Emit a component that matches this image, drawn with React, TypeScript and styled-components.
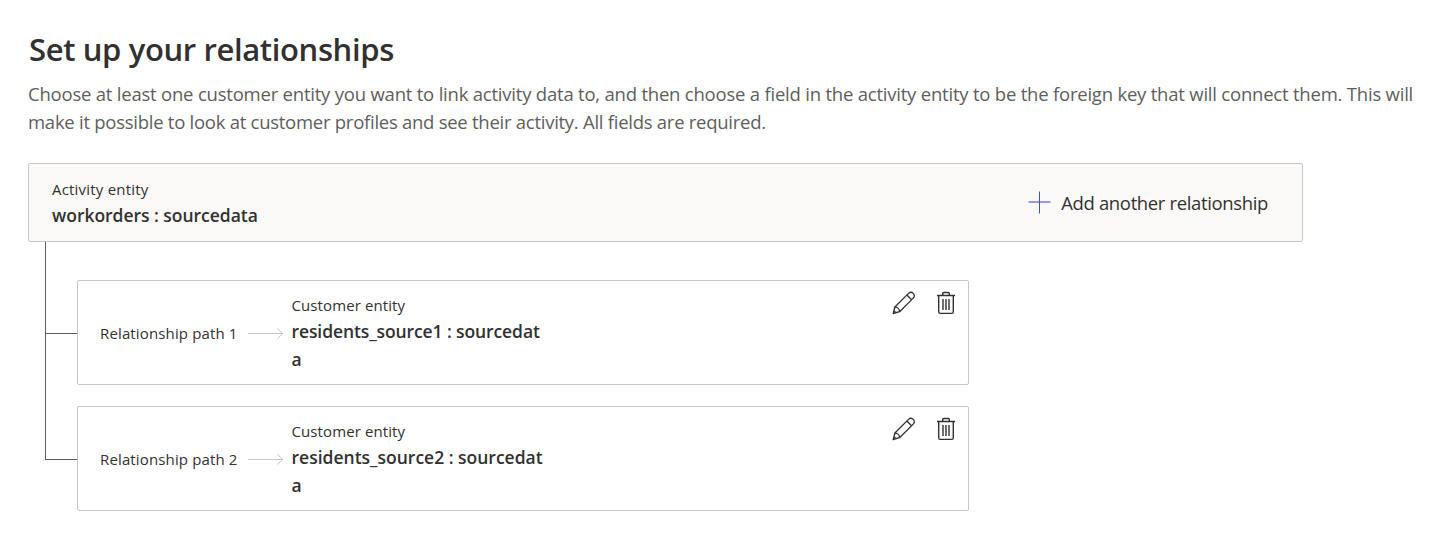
import React from "react";
import styled, { createGlobalStyle } from "styled-components";

const GlobalStyle = createGlobalStyle`
  * { box-sizing: border-box; }
  body {
    margin: 0;
    background: #fff;
    color: #323130;
    font-family: "Segoe UI", "Open Sans", "Noto Sans", sans-serif;
  }
`;

const Page = styled.main`
  padding: 28px 0 0 28px;
`;

const Title = styled.h1`
  margin: 0;
  padding-left: 1px;
  font-size: 31px;
  line-height: 42px;
  font-weight: 600;
  letter-spacing: -0.37px;
  white-space: nowrap;
`;

const Description = styled.p`
  margin: 10px 0 27px;
  font-size: 18.5px;
  line-height: 28px;
  color: #605e5c;
`;

const Line = styled.span<{ $spacing: number }>`
  display: block;
  white-space: nowrap;
  letter-spacing: ${(p) => p.$spacing}px;
`;

const ActivityPanel = styled.section`
  display: flex;
  justify-content: space-between;
  align-items: center;
  width: 1275px;
  height: 79px;
  padding: 0 34px 0 23px;
  background: #faf9f8;
  border: 1px solid #c8c6c4;
  border-radius: 2px;
`;

const Label = styled.div<{ $spacing?: number }>`
  font-size: 15px;
  line-height: 24px;
  letter-spacing: ${(p) => p.$spacing ?? 0.14}px;
  white-space: nowrap;
`;

const EntityName = styled.div<{ $spacing?: number }>`
  font-size: 17.5px;
  line-height: 28px;
  font-weight: 600;
  letter-spacing: ${(p) => p.$spacing ?? 0}px;
  word-break: break-all;
`;

const AddButton = styled.button`
  display: flex;
  align-items: center;
  gap: 10px;
  padding: 0;
  border: 0;
  background: none;
  color: #323130;
  font-family: inherit;
  font-size: 18.5px;
  line-height: 28px;
  letter-spacing: -0.36px;
  white-space: nowrap;
`;

const Tree = styled.div`
  width: 924px;
  margin-left: 17px;
`;

const Branch = styled.div<{ $gap: number }>`
  display: flex;
  height: ${(p) => p.$gap + 105}px;
`;

const Connector = styled.div`
  width: 32px;
  display: flex;
  flex-direction: column;
`;

const Elbow = styled.div<{ $gap: number }>`
  height: ${(p) => p.$gap + 54}px;
  border-left: 1px solid #605e5c;
  border-bottom: 1px solid #605e5c;
`;

const Trunk = styled.div`
  flex: 1;
  border-left: 1px solid #605e5c;
`;

const Card = styled.article<{ $gap: number }>`
  display: flex;
  width: 892px;
  height: 105px;
  margin-top: ${(p) => p.$gap}px;
  padding: 0 10px 0 22px;
  border: 1px solid #c8c6c4;
  border-radius: 2px;
`;

const Path = styled.div`
  display: flex;
  align-items: center;
  width: 191.5px;
`;

const PathLabel = styled(Label)`
  width: 148px;
`;

const Customer = styled.div`
  width: 254px;
  padding-top: 12px;
`;

const Actions = styled.div`
  display: flex;
  gap: 18px;
  margin-left: auto;
  padding-top: 10px;
`;

const IconButton = styled.button`
  display: flex;
  width: 24px;
  height: 24px;
  padding: 0;
  border: 0;
  background: none;
  color: #323130;
`;

const PlusIcon = () => (
  <svg width="23" height="23" viewBox="0 0 23 23" fill="none">
    <path d="M0.5 11H22.5" stroke="#9a9bdc" strokeWidth="2" />
    <path d="M11.5 0.5V22.5" stroke="#3f51c4" strokeWidth="1" />
  </svg>
);

const ArrowIcon = () => (
  <svg width="36" height="12" viewBox="0 0 36 12" fill="none" stroke="#c8c6c4">
    <path d="M0 6.5H35M29.5 1.5L34.7 6.5L29.5 11.5" />
  </svg>
);

const EditIcon = () => (
  <svg width="24" height="24" viewBox="0 0 24 24" fill="none" stroke="currentColor" strokeWidth="1.3" strokeLinejoin="round">
    <path d="M1.2 22.5L2.9 16L16.5 2.4C17.8 1.1 19.9 1.1 21.2 2.4C22.5 3.7 22.5 5.8 21.2 7.1L7.6 20.7Z" />
    <path d="M14.9 4L19.6 8.7M2.9 16C5.5 16 7.6 18.1 7.6 20.7M1.9 20C2.9 20.3 3.4 20.9 3.7 21.8" />
  </svg>
);

const DeleteIcon = () => (
  <svg width="24" height="24" viewBox="0 0 24 24" fill="none" stroke="currentColor" strokeWidth="1.4">
    <path d="M3 4.5H21M8.7 4.5V2.6Q8.7 1.5 9.8 1.5H14.2Q15.3 1.5 15.3 2.6V4.5" />
    <path d="M4.7 4.5V20.8Q4.7 22.4 6.3 22.4H17.7Q19.3 22.4 19.3 20.8V4.5" />
    <path d="M9 8V19M12 8V19M15 8V19" />
  </svg>
);

const relationships = [
  { path: "Relationship path 1", entity: "residents_source1 : sourcedata", gap: 38, spacing: -0.1 },
  { path: "Relationship path 2", entity: "residents_source2 : sourcedata", gap: 21, spacing: 0 },
];

export default function App() {
  return (
    <Page>
      <GlobalStyle />
      <Title>Set up your relationships</Title>
      <Description>
        <Line $spacing={-0.214}>
          Choose at least one customer entity you want to link activity data to, and then choose a field in the activity entity to be the foreign key that will connect them. This will
        </Line>
        <Line $spacing={-0.265}>
          make it possible to look at customer profiles and see their activity. All fields are required.
        </Line>
      </Description>
      <ActivityPanel>
        <div>
          <Label $spacing={0.2}>Activity entity</Label>
          <EntityName $spacing={-0.03}>workorders : sourcedata</EntityName>
        </div>
        <AddButton>
          <PlusIcon />
          Add another relationship
        </AddButton>
      </ActivityPanel>
      <Tree>
        {relationships.map((r, i) => (
          <Branch key={r.path} $gap={r.gap}>
            <Connector>
              <Elbow $gap={r.gap} />
              {i < relationships.length - 1 && <Trunk />}
            </Connector>
            <Card $gap={r.gap}>
              <Path>
                <PathLabel>{r.path}</PathLabel>
                <ArrowIcon />
              </Path>
              <Customer>
                <Label $spacing={0.1}>Customer entity</Label>
                <EntityName $spacing={r.spacing}>{r.entity}</EntityName>
              </Customer>
              <Actions>
                <IconButton aria-label="Edit"><EditIcon /></IconButton>
                <IconButton aria-label="Delete"><DeleteIcon /></IconButton>
              </Actions>
            </Card>
          </Branch>
        ))}
      </Tree>
    </Page>
  );
}
